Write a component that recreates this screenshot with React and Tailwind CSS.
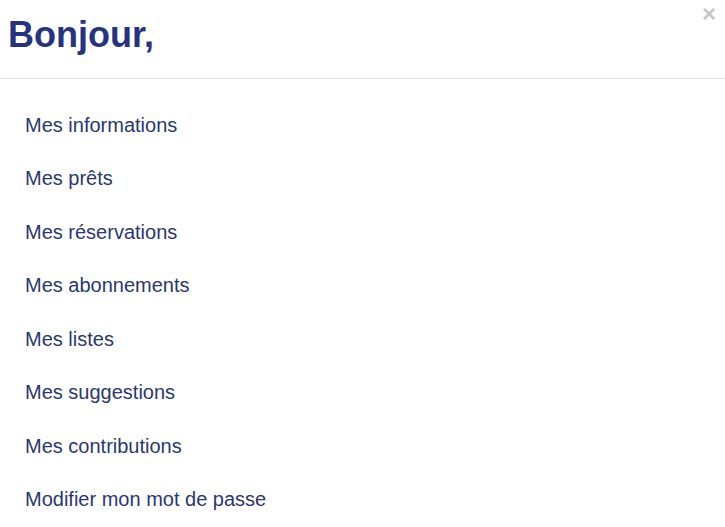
import React from "react";

const items = [
  "Mes informations",
  "Mes prêts",
  "Mes réservations",
  "Mes abonnements",
  "Mes listes",
  "Mes suggestions",
  "Mes contributions",
  "Modifier mon mot de passe",
];

const App = () => {
  return (
    <div
      className="relative min-h-screen w-full bg-white"
      style={{ fontFamily: '"Liberation Sans", Arial, sans-serif' }}
    >
      <div className="relative h-[79px] border-b border-[#e2e2e2] px-2 pt-[8px]">
        <h1 className="text-[36px] font-bold leading-normal text-[#263380]">
          Bonjour,
        </h1>
        <button className="absolute right-[9px] top-[2px] text-[24px] font-bold leading-none text-[#c6c6c6]">
          ×
        </button>
      </div>

      <ul className="flex flex-col pt-[19px]">
        {items.map((label) => (
          <li key={label}>
            <a className="block px-[25px] py-[12.5px] text-[20px] leading-[1.42857] text-[#2b3672]">
              {label}
            </a>
          </li>
        ))}
      </ul>
    </div>
  );
};

export default App;
